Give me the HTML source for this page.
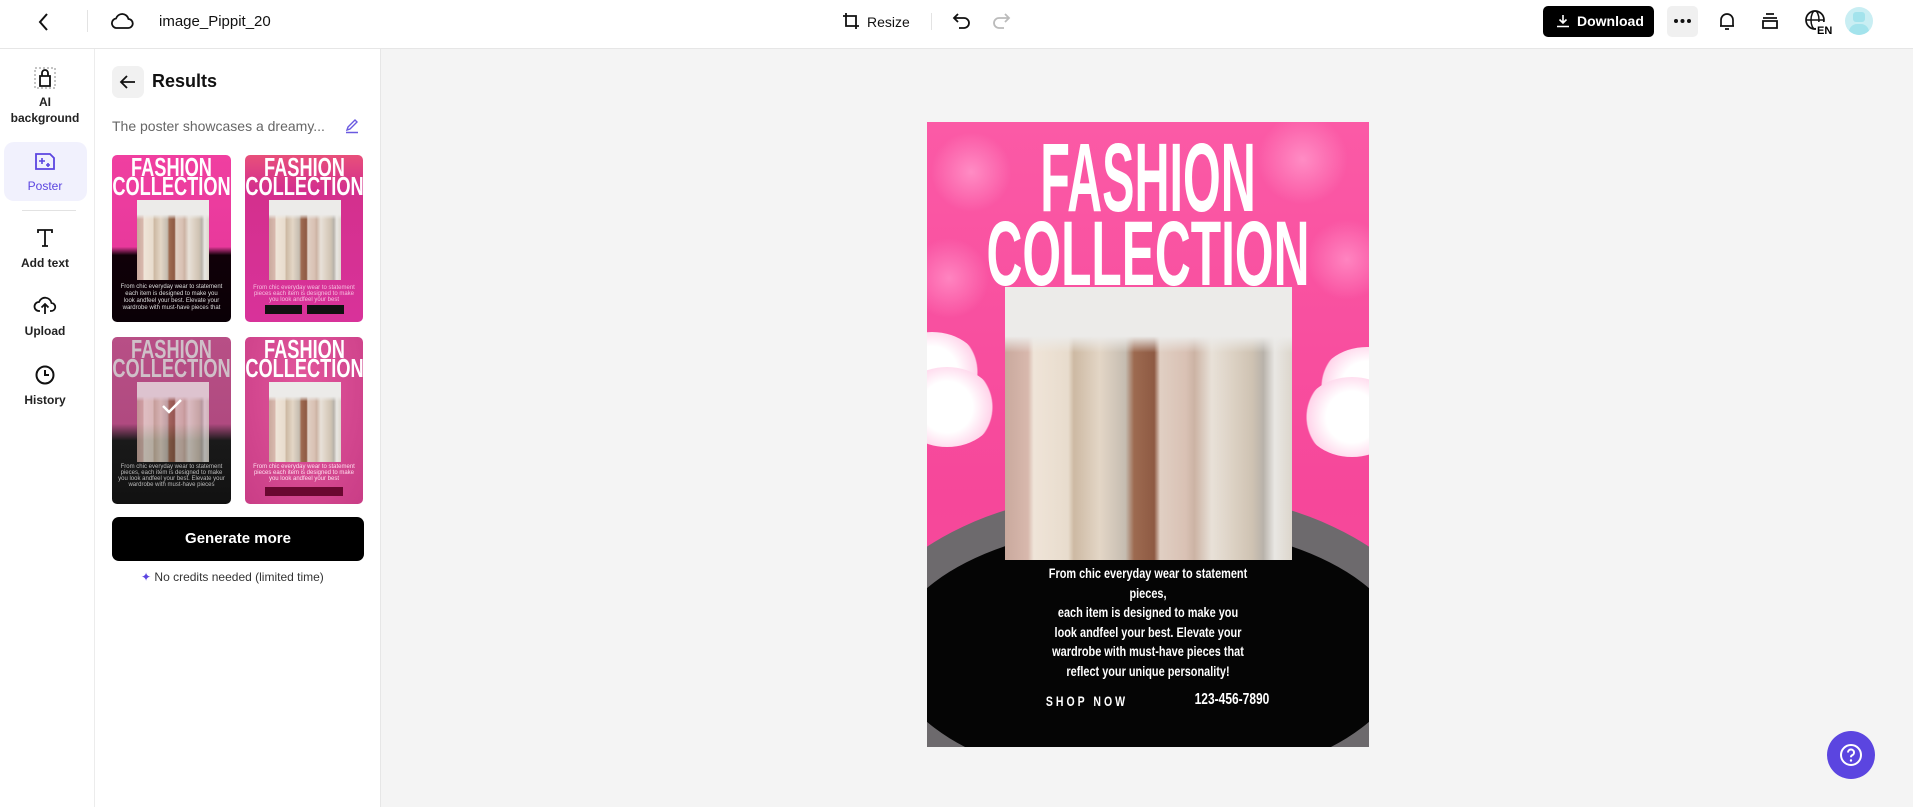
<!DOCTYPE html>
<html><head><meta charset="utf-8"><style>
*{box-sizing:border-box;margin:0;padding:0}
html,body{width:1913px;height:807px;overflow:hidden}
body{font-family:"Liberation Sans",sans-serif;background:#f4f4f4;position:relative;color:#111}
.a{position:absolute}
.top{left:0;top:0;width:1913px;height:49px;background:#fff;border-bottom:1px solid #e6e6e6}
.rail{left:0;top:49px;width:95px;height:758px;background:#fff;border-right:1px solid #ececec}
.panel{left:95px;top:49px;width:286px;height:758px;background:#fff;border-right:1px solid #e6e6e6}
.ri{position:absolute;left:0;width:90px;text-align:center;font-size:12px;font-weight:bold;color:#222;line-height:16px}
.cond{font-weight:bold;white-space:nowrap;text-align:center}
.photo{background:
linear-gradient(180deg,#ecebe9 0%,#ecebe9 18%,transparent 24%),
linear-gradient(90deg,#c9a99d 0%,#d8b8ad 8%,#efe4d8 10%,#e8dccd 22%,#cdb9a3 24%,#e3d6c6 33%,#d9cdbf 36%,#c5bcb0 42%,#9d6a50 45%,#8e5a43 52%,#e0cfc3 54%,#d9c1b4 63%,#ccb3a4 66%,#e8e1d8 72%,#dbd0c2 80%,#cfc3b3 86%,#b8b2aa 90%,#e9e7e3 94%,#dcd6cc 100%)}
.th1{left:-40px;width:199px;top:3px;color:#fff;font-size:26px;line-height:19px;transform:scaleX(.7)}
</style></head><body>
<div class="a top"></div>
<svg class="a" style="left:36px;top:12px" width="16" height="20" viewBox="0 0 16 20"><path d="M11 2L4 10l7 8" fill="none" stroke="#111" stroke-width="2"/></svg>
<div class="a" style="left:87px;top:10px;width:1px;height:22px;background:#e3e3e3"></div>
<svg class="a" style="left:110px;top:11px" width="24" height="20" viewBox="0 0 24 20"><path d="M6 17h12a4.5 4.5 0 0 0 .5-9A6.5 6.5 0 0 0 6 7.5 4.8 4.8 0 0 0 6 17z" fill="none" stroke="#111" stroke-width="1.8"/></svg>
<div class="a" style="left:159px;top:13px;font-size:15px">image_Pippit_20</div>
<svg class="a" style="left:841px;top:11px" width="20" height="20" viewBox="0 0 20 20"><path d="M5 2v13h13M2 5h13v13" fill="none" stroke="#111" stroke-width="1.8"/></svg>
<div class="a" style="left:867px;top:14px;font-size:14px">Resize</div>
<div class="a" style="left:931px;top:13px;width:1px;height:17px;background:#e3e3e3"></div>
<svg class="a" style="left:952px;top:11px" width="20" height="20" viewBox="0 0 20 20"><path d="M6 3L2 7l4 4M2 7h10a5 5 0 0 1 0 10H7" fill="none" stroke="#111" stroke-width="1.8"/></svg>
<svg class="a" style="left:991px;top:11px" width="20" height="20" viewBox="0 0 20 20"><path d="M14 3l4 4-4 4M18 7H8a5 5 0 0 0 0 10h5" fill="none" stroke="#bbb" stroke-width="1.8"/></svg>
<div class="a" style="left:1543px;top:6px;width:111px;height:31px;background:#000;border-radius:5px;color:#fff;font-size:14px;font-weight:bold;line-height:31px;padding-left:34px">Download</div>
<svg class="a" style="left:1556px;top:14px" width="14" height="14" viewBox="0 0 14 14"><path d="M7 1v8M3.5 5.5L7 9l3.5-3.5M1 12.5h12" fill="none" stroke="#fff" stroke-width="1.6"/></svg>
<div class="a" style="left:1667px;top:6px;width:31px;height:31px;background:#f0f0f0;border-radius:5px"></div>
<svg class="a" style="left:1672px;top:18px" width="21" height="6" viewBox="0 0 21 6"><circle cx="4" cy="3" r="2" fill="#111"/><circle cx="10.5" cy="3" r="2" fill="#111"/><circle cx="17" cy="3" r="2" fill="#111"/></svg>
<svg class="a" style="left:1716px;top:10px" width="22" height="22" viewBox="0 0 22 22"><path d="M5 16V10a6 6 0 0 1 12 0v6H4h14M9 19h4" fill="none" stroke="#111" stroke-width="1.7"/></svg>
<svg class="a" style="left:1760px;top:11px" width="20" height="20" viewBox="0 0 20 20"><path d="M6 3h8M3 7h14M3 10h14v7H3z" fill="none" stroke="#111" stroke-width="1.8"/></svg>
<svg class="a" style="left:1804px;top:9px" width="28" height="26" viewBox="0 0 28 26"><circle cx="11" cy="11" r="9" fill="none" stroke="#111" stroke-width="1.7"/><ellipse cx="11" cy="11" rx="4" ry="9" fill="none" stroke="#111" stroke-width="1.5"/><path d="M2 11h18" stroke="#111" stroke-width="1.5"/><rect x="12" y="13" width="16" height="13" fill="#fff"/><text x="13" y="25" font-size="11" font-weight="bold" font-family="Liberation Sans">EN</text></svg>
<div class="a" style="left:1845px;top:7px;width:28px;height:28px;border-radius:50%;background:#c9eef3;overflow:hidden"><div class="a" style="left:8px;top:5px;width:12px;height:10px;border-radius:3px;background:#a3e3ec"></div><div class="a" style="left:4px;top:17px;width:20px;height:14px;border-radius:8px 8px 0 0;background:#a3e3ec"></div></div>

<div class="a rail"></div>
<svg class="a" style="left:34px;top:67px" width="22" height="22" viewBox="0 0 22 22"><rect x="1" y="1" width="20" height="20" fill="none" stroke="#888" stroke-dasharray="2 2"/><path d="M6 19V9h10v10zM8 9V6a3 3 0 0 1 6 0v3" fill="none" stroke="#111" stroke-width="1.8"/></svg>
<div class="ri" style="top:94px;left:0">AI<br>background</div>
<div class="a" style="left:4px;top:142px;width:83px;height:59px;background:#f1f1fd;border-radius:10px"></div>
<svg class="a" style="left:34px;top:151px" width="22" height="20" viewBox="0 0 22 20"><path d="M2 3h14l4 4v11H2z" fill="none" stroke="#5b45e0" stroke-width="1.8"/><path d="M8 7v6M5 10h6M14 12v4M12 14h4" stroke="#5b45e0" stroke-width="1.6"/></svg>
<div class="ri" style="top:178px;color:#5b45e0;font-weight:normal">Poster</div>
<div class="a" style="left:22px;top:210px;width:54px;height:1px;background:#e2e2e2"></div>
<svg class="a" style="left:35px;top:228px" width="20" height="20" viewBox="0 0 20 20"><path d="M3 5V2h14v3M10 2v16M7 18h6" fill="none" stroke="#111" stroke-width="1.8"/></svg>
<div class="ri" style="top:255px">Add text</div>
<svg class="a" style="left:33px;top:295px" width="24" height="20" viewBox="0 0 24 20"><path d="M7 16H6a4.5 4.5 0 0 1 0-9 6.5 6.5 0 0 1 12.5 1 4 4 0 0 1-.5 8h-1M12 9v10M8.5 12.5L12 9l3.5 3.5" fill="none" stroke="#111" stroke-width="1.8"/></svg>
<div class="ri" style="top:323px">Upload</div>
<svg class="a" style="left:34px;top:364px" width="22" height="22" viewBox="0 0 22 22"><circle cx="11" cy="11" r="8.5" fill="none" stroke="#111" stroke-width="2"/><path d="M11 6v5h4" fill="none" stroke="#111" stroke-width="2"/></svg>
<div class="ri" style="top:392px">History</div>

<div class="a panel"></div>
<div class="a" style="left:112px;top:66px;width:32px;height:32px;background:#f1f1f1;border-radius:7px"></div>
<svg class="a" style="left:119px;top:73px" width="18" height="18" viewBox="0 0 18 18"><path d="M16 9H3M8 3L2 9l6 6" fill="none" stroke="#111" stroke-width="1.8"/></svg>
<div class="a" style="left:152px;top:71px;font-size:18px;font-weight:bold">Results</div>
<div class="a" style="left:112px;top:118px;font-size:14px;color:#666">The poster showcases a dreamy...</div>
<svg class="a" style="left:344px;top:118px" width="16" height="16" viewBox="0 0 16 16"><path d="M3 12l1-3 7-7 2 2-7 7zM2 14.5h12" fill="none" stroke="#6a5ae0" stroke-width="1.4"/></svg>

<div class="a" style="left:112px;top:155px;width:119px;height:167px;border-radius:5px;overflow:hidden;background:linear-gradient(180deg,#f03fa0 0%,#e8399c 55%,#100008 60%,#0a0006 100%)">
 <div class="a photo" style="left:25px;top:45px;width:72px;height:80px"></div>
 <div class="a cond th1">FASHION<br>COLLECTION</div>
 <div class="a" style="left:4px;top:129px;width:111px;color:#ddd;font-size:6px;text-align:center;line-height:7px">From chic everyday wear to statement<br>each item is designed to make you<br>look andfeel your best. Elevate your<br>wardrobe with must-have pieces that</div>
</div>
<div class="a" style="left:245px;top:155px;width:118px;height:167px;border-radius:5px;overflow:hidden;background:linear-gradient(180deg,#e8507a 0%,#d4308d 20%,#d8329a 100%)">
 <div class="a photo" style="left:24px;top:45px;width:72px;height:80px"></div>
 <div class="a cond th1">FASHION<br>COLLECTION</div>
 <div class="a" style="left:6px;top:130px;width:106px;font-size:6px;text-align:center;line-height:6px;color:#f7bfe0">From chic everyday wear to statement pieces each item is designed to make you look andfeel your best</div>
 <div class="a" style="left:20px;top:150px;width:37px;height:9px;background:#111"></div><div class="a" style="left:62px;top:150px;width:37px;height:9px;background:#111"></div>
</div>
<div class="a" style="left:112px;top:337px;width:119px;height:167px;border-radius:5px;overflow:hidden;background:linear-gradient(180deg,#b84f86 0%,#b04a80 52%,#1a1a1a 62%,#111 100%)">
 <div class="a photo" style="left:25px;top:45px;width:72px;height:80px;opacity:.75"></div>
 <div class="a cond th1" style="color:#cfc0c8">FASHION<br>COLLECTION</div>
 <svg class="a" style="left:48px;top:59px" width="24" height="20" viewBox="0 0 24 20"><path d="M3 10l6 6L21 4" fill="none" stroke="#fff" stroke-width="2.5"/></svg>
 <div class="a" style="left:4px;top:127px;width:111px;color:#bbb;font-size:6px;text-align:center;line-height:6px">From chic everyday wear to statement pieces, each item is designed to make you look andfeel your best. Elevate your wardrobe with must-have pieces</div>
</div>
<div class="a" style="left:245px;top:337px;width:118px;height:167px;border-radius:5px;overflow:hidden;background:radial-gradient(ellipse at 50% 30%,#e2569c,#c93d86)">
 <div class="a photo" style="left:24px;top:45px;width:72px;height:80px"></div>
 <div class="a cond th1">FASHION<br>COLLECTION</div>
 <div class="a" style="left:6px;top:127px;width:106px;font-size:6px;text-align:center;line-height:6px;color:#fde">From chic everyday wear to statement pieces each item is designed to make you look andfeel your best</div>
 <div class="a" style="left:20px;top:150px;width:78px;height:9px;background:#6a0830"></div>
</div>

<div class="a" style="left:112px;top:517px;width:252px;height:44px;background:#000;border-radius:7px;color:#fff;font-size:15px;font-weight:bold;text-align:center;line-height:44px">Generate more</div>
<div class="a" style="left:141px;top:570px;font-size:12px;color:#333"><span style="color:#5b45e0">✦</span> No credits needed (limited time)</div>

<div class="a" style="left:927px;top:122px;width:442px;height:625px;overflow:hidden;background:
radial-gradient(circle at 10% 8%,#ff8cc4 0,transparent 40px),radial-gradient(circle at 85% 6%,#ff8cc4 0,transparent 45px),radial-gradient(circle at 95% 22%,#ff84c0 0,transparent 40px),radial-gradient(circle at 5% 25%,#ff84c0 0,transparent 40px),
linear-gradient(180deg,#fb5aa6 0%,#f6479a 60%,#f34d9e 100%)">
 <div class="a" style="left:-45px;top:210px;width:100px;height:80px;border-radius:50%;background:radial-gradient(circle,#fff 40%,#ffd4ea 70%,transparent 72%)"></div>
 <div class="a" style="left:-30px;top:245px;width:100px;height:80px;border-radius:50%;background:radial-gradient(circle,#fff 40%,#ffd4ea 70%,transparent 72%)"></div>
 <div class="a" style="left:390px;top:225px;width:100px;height:80px;border-radius:50%;background:radial-gradient(circle,#fff 40%,#ffd4ea 70%,transparent 72%)"></div>
 <div class="a" style="left:375px;top:255px;width:100px;height:80px;border-radius:50%;background:radial-gradient(circle,#fff 40%,#ffd4ea 70%,transparent 72%)"></div>
 <div class="a" style="left:-70px;top:367px;width:582px;height:330px;border-radius:50%;background:#6d6a6d"></div>
 <div class="a" style="left:-36px;top:402px;width:514px;height:262px;border-radius:50%;background:#050505"></div>
 <div class="a photo" style="left:78px;top:165px;width:287px;height:273px"></div>
 <div class="a cond" style="left:-100px;width:642px;top:18px;color:#fff;font-size:97px;line-height:76px;transform:scaleX(.5)">FASHION</div>
 <div class="a cond" style="left:-200px;width:842px;top:94px;color:#fff;font-size:92px;line-height:76px;transform:scaleX(.54)">COLLECTION</div>
 <div class="a cond" style="left:46px;width:350px;top:442px;color:#fff;font-size:14px;line-height:19.5px;white-space:normal;padding:0 45px;transform:scaleX(.78)">From chic everyday wear to statement pieces,<br>each item is designed to make you look andfeel your best. Elevate your wardrobe with must-have pieces that reflect your unique personality!</div>
 <div class="a cond" style="left:100px;width:120px;top:571px;color:#fff;font-size:14px;letter-spacing:4px;transform:scaleX(.75)">SHOP NOW</div>
 <div class="a cond" style="left:250px;width:110px;top:569px;color:#fff;font-size:16px;transform:scaleX(.75)">123-456-7890</div>
</div>

<div class="a" style="left:1827px;top:731px;width:48px;height:48px;border-radius:50%;background:#5b45e0"></div>
<svg class="a" style="left:1838px;top:742px" width="26" height="26" viewBox="0 0 26 26"><circle cx="13" cy="13" r="10" fill="none" stroke="#fff" stroke-width="2"/><path d="M10 10.5a3 3 0 1 1 4 2.8c-.8.4-1 1-1 2" fill="none" stroke="#fff" stroke-width="2"/><circle cx="13" cy="18.5" r="1.2" fill="#fff"/></svg>
</body></html>
